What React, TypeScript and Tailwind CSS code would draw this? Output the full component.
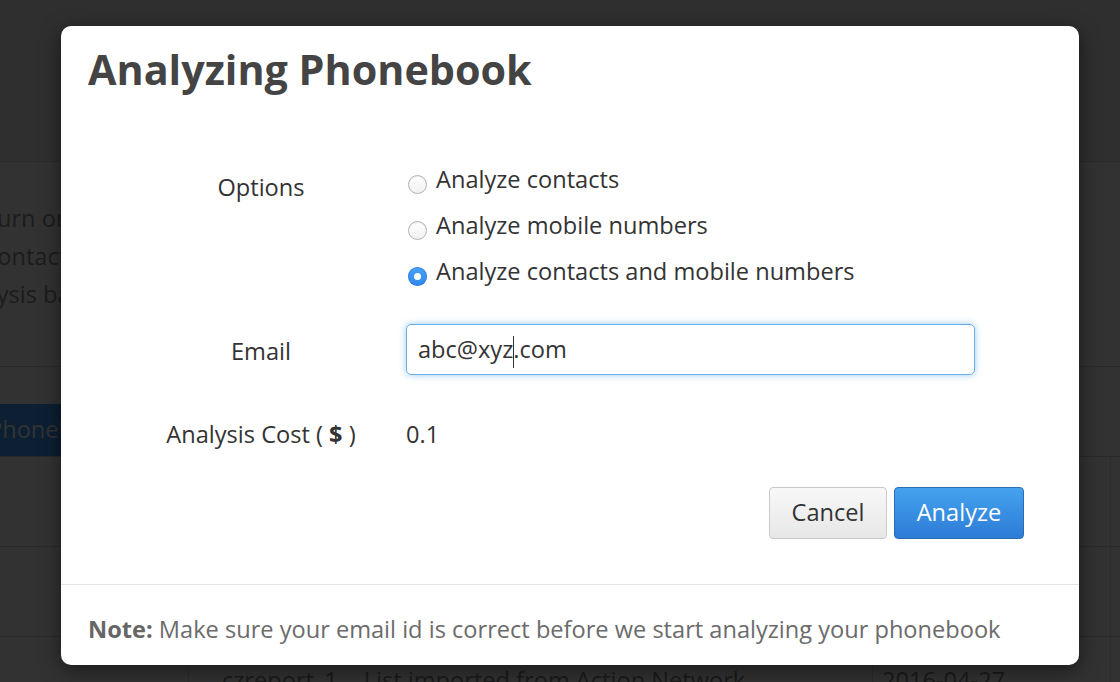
import React from 'react';

const font = "font-['Open_Sans','Liberation_Sans',sans-serif]";

const Radio = ({ checked }: { checked?: boolean }) =>
  checked ? (
    <span className="mt-[19px] ml-[2px] flex h-[19px] w-[19px] shrink-0 items-center justify-center rounded-full bg-gradient-to-b from-[#4aa3f7] to-[#2f86ec] shadow-[inset_0_0_0_1px_rgba(20,90,190,0.35)]">
      <span className="h-[7px] w-[7px] rounded-full bg-white" />
    </span>
  ) : (
    <span className="mt-[19px] ml-[2px] h-[19px] w-[19px] shrink-0 rounded-full border border-[#b3b3b3] bg-gradient-to-b from-white to-[#f1f1f1] shadow-[inset_0_1px_1px_rgba(0,0,0,0.08)]" />
  );

const options = [
  { label: 'Analyze contacts' },
  { label: 'Analyze mobile numbers' },
  { label: 'Analyze contacts and mobile numbers', checked: true },
];

export default function App() {
  return (
    <div className={`relative h-[682px] w-[1120px] overflow-hidden bg-[#323232] ${font}`}>
      {/* page behind the overlay */}
      <div className="h-[162px] border-b border-[#2a2a2a] bg-[#2f2f2f]" />
      <div className="h-[205px] border-b border-[#2a2a2a] pt-[37px] text-[23.6px] leading-[38px] text-[#1c1c1c]">
        <div className="ml-[-16px] whitespace-nowrap">Turn on the analysis</div>
        <div className="ml-[-14px] whitespace-nowrap">contacts and numbers</div>
        <div className="ml-[-50px] whitespace-nowrap">analysis based</div>
      </div>
      <div className="h-[89px] pt-[37px]">
        <div className="ml-[-14px] flex h-[52px] w-[200px] items-center rounded-[4px] bg-[#0c1f33] pl-[2px] text-[23.6px] text-[#333]">
          Phonebook
        </div>
      </div>
      <div className="border-t border-[#2a2a2a]">
        {[0, 1, 2].map((i) => (
          <div
            key={i}
            className="grid h-[90px] grid-cols-[188px_684px_238px_1fr] border-b border-[#2a2a2a] text-[23.6px] leading-[30px] text-[#1a1a1a]"
          >
            <div />
            <div className="flex items-start gap-[26px] border-l border-[#2c2c2c] pl-[33px] pt-[28px]">
              {i === 2 && (
                <>
                  <span>czreport_1</span>
                  <span>List imported from Action Network</span>
                </>
              )}
            </div>
            <div className="flex items-start border-l border-[#2c2c2c] pl-[9px] pt-[28px]">
              {i === 2 && <span>2016-04-27</span>}
            </div>
            <div className="border-l border-[#2c2c2c]" />
          </div>
        ))}
      </div>

      {/* modal */}
      <div className="absolute left-[61px] top-[26px] flex h-[639px] w-[1018px] flex-col rounded-[10px] bg-white shadow-[0_5px_20px_rgba(0,0,0,0.5)]">
        <div className="pl-[27px] pt-[18px]">
          <h1 className="text-[41.3px] font-bold leading-[50px] text-[#444]">Analyzing Phonebook</h1>
        </div>

        <div className="mt-[62px] grid grid-cols-[266px_569px] gap-x-[12px] pl-[67px] text-[23.6px] text-[#333]">
          <div className="pt-[8px] text-center leading-[46px]">Options</div>
          <div className="flex flex-col">
            {options.map((o) => (
              <label key={o.label} className="flex h-[46px] gap-[9px] leading-[46px]">
                <Radio checked={o.checked} />
                <span className="whitespace-nowrap">{o.label}</span>
              </label>
            ))}
          </div>

          <div className="mt-[30px] pt-[2px] text-center leading-[51px]">Email</div>
          <div className="mt-[30px] flex h-[51px] items-center rounded-[5px] border border-[#66afe9] pl-[11px] shadow-[0_0_7px_rgba(102,175,233,0.65)]">
            <span className="whitespace-nowrap">
              abc@xyz
              <span className="mx-[-0.5px] inline-block h-[32px] w-px translate-y-[1px] bg-[#333] align-middle" />
              .com
            </span>
          </div>

          <div className="mt-[34px] text-center leading-[46px]">
            Analysis Cost ( <span className="font-bold">$</span> )
          </div>
          <div className="mt-[34px] leading-[46px]">0.1</div>
        </div>

        <div className="mt-[30px] flex justify-end gap-[7px] pr-[55px] text-[23.6px]">
          <button className="h-[52px] w-[118px] rounded-[4px] border border-[#c9c9c9] bg-gradient-to-b from-[#f8f8f8] to-[#e7e7e7] text-[#333]">
            Cancel
          </button>
          <button className="h-[52px] w-[130px] rounded-[4px] border border-[#2b6db4] bg-gradient-to-b from-[#45a2ee] to-[#2d7cd6] text-white">
            Analyze
          </button>
        </div>

        <div className="mt-auto h-[81px] border-t border-[#e5e5e5] pl-[27px] pt-[29px] text-[23.6px] leading-[30px] text-[#6b6b6b]">
          <span className="font-bold text-[#666]">Note:</span> Make sure your email id is correct before we start
          analyzing your phonebook
        </div>
      </div>
    </div>
  );
}
